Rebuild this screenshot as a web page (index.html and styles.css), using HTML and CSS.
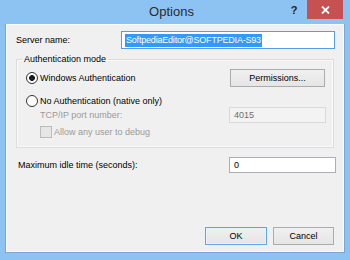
FILE: index.html
```html
<!DOCTYPE html>
<html lang="en">
<head>
    <meta charset="UTF-8">
    <title>Options</title>
    <link rel="stylesheet" href="styles.css">
</head>
<body>
<div class="window">
    <div class="titlebar">
        <span></span>
        <div class="title">Options</div>
        <div class="caption-buttons">
            <span class="help">?</span>
            <span class="close">
                <svg width="9" height="8" viewBox="0 0 9 8"><path d="M1 0.5 L8 7.5 M8 0.5 L1 7.5" stroke="#fff" stroke-width="1.8"/></svg>
            </span>
        </div>
    </div>

    <div class="client">
        <div class="row server-row">
            <span class="label">Server name:</span>
            <div class="textbox focused server-box"><span class="selected">SoftpediaEditor@SOFTPEDIA-S93</span></div>
        </div>

        <fieldset class="group">
            <legend>Authentication mode</legend>
            <div class="row first-row">
                <label class="option"><input type="radio" name="auth" checked>Windows Authentication</label>
                <button class="button permissions">Permissions...</button>
            </div>
            <div class="row second-row">
                <label class="option"><input type="radio" name="auth">No Authentication (native only)</label>
            </div>
            <div class="row port-row">
                <span class="label disabled indent">TCP/IP port number:</span>
                <div class="textbox disabled-box port-box">4015</div>
            </div>
            <div class="row check-row">
                <label class="option disabled indent"><input type="checkbox" disabled>Allow any user to debug</label>
            </div>
        </fieldset>

        <div class="row idle-row">
            <span class="label idle-label">Maximum idle time (seconds):</span>
            <div class="textbox idle-box">0</div>
        </div>

        <div class="footer">
            <button class="button default ok">OK</button>
            <button class="button cancel">Cancel</button>
        </div>
    </div>
</div>
</body>
</html>
```

FILE: styles.css
```css
body {
    margin: 0;
    font-family: "Liberation Sans", Arial, sans-serif;
    font-size: 9px;
    color: #000;
}

.window {
    width: 350px;
    height: 260px;
    background: #8cc3f2;
    display: flex;
    flex-direction: column;
}

/* title bar */
.titlebar {
    height: 24px;
    display: grid;
    grid-template-columns: 1fr auto 1fr;
    padding-right: 7px;
}
.title {
    font-size: 13px;
    line-height: 24px;
    color: #2b2b2b;
}
.caption-buttons {
    display: flex;
    justify-content: flex-end;
    align-items: flex-start;
}
.help {
    width: 26px;
    height: 19px;
    text-align: center;
    font-weight: bold;
    font-size: 11px;
    line-height: 20px;
    color: #222;
}
.close {
    width: 36px;
    height: 19px;
    background: #c75050;
    display: flex;
    align-items: center;
    justify-content: center;
}

/* client area */
.client {
    flex: 1;
    margin: 0 5px 7px;
    border: 1px solid #7ba6d3;
    border-top: none;
    background: #f0f0f0;
    box-shadow: inset 0 0 0 1px #fbfbfb;
    padding: 7px 9px 7px 10px;
    display: flex;
    flex-direction: column;
}

.row {
    display: flex;
    align-items: center;
    justify-content: space-between;
}

.textbox {
    box-sizing: border-box;
    height: 16px;
    border: 1px solid #abadb3;
    background: #fff;
    padding-left: 4px;
    line-height: 14px;
    white-space: nowrap;
}
.textbox.focused {
    border-color: #569de5;
}
.server-box {
    width: 214px;
    height: 18px;
    line-height: 16px;
    padding-left: 3px;
}
.selected {
    background: #3399ff;
    color: #fff;
    padding: 1px 1px 2px;
    letter-spacing: -0.2px;
}

/* group box */
.group {
    margin: 4px 1px 0 0;
    padding: 0 8px 9px 9px;
    border: 1px solid #dcdcdc;
    box-shadow: inset 0 0 0 1px #fafafa;
}
.group legend {
    line-height: 12px;
    padding: 0 2px;
    margin-left: -4px;
}
.first-row {
    margin-top: 4px;
    height: 18px;
}
.second-row {
    margin-top: 7px;
    height: 13px;
}
.port-row {
    height: 16px;
}
.check-row {
    margin-top: 3px;
    height: 12px;
}
.indent {
    margin-left: 14px;
}

.option {
    display: flex;
    align-items: center;
}
.option input {
    appearance: none;
    margin: 0 2px 0 0;
    width: 12px;
    height: 12px;
    box-sizing: border-box;
    border: 1px solid #333;
    background: #fff;
}
.option input[type="radio"] {
    border-radius: 50%;
}
.option input[type="radio"]:checked {
    background: radial-gradient(circle, #1a1a1a 0 2.6px, #fff 3.2px);
}
.option input[type="checkbox"] {
    border-color: #bcbcbc;
    background: #e6e6e6;
}

.disabled {
    color: #9a9a9a;
}
.disabled-box {
    width: 97px;
    margin-right: -1px;
    border-color: #d9d9d9;
    background: #f3f3f3;
    color: #6d6d6d;
}

/* buttons */
.button {
    box-sizing: border-box;
    height: 18px;
    padding: 0;
    border: 1px solid #acacac;
    background: linear-gradient(#f0f0f0, #e5e5e5);
    font: inherit;
    color: #000;
}
.button.default {
    border-color: #5ea5ea;
    box-shadow: inset 0 0 0 1px #e8f1fb;
}
.permissions {
    width: 95px;
}

.idle-row {
    margin-top: 9px;
}
.idle-label {
    margin-left: 2px;
}
.idle-box {
    width: 107px;
    margin-right: -1px;
}

.footer {
    margin-top: auto;
    margin-right: 1px;
    display: flex;
    justify-content: flex-end;
    gap: 6px;
}
.ok {
    width: 62px;
}
.cancel {
    width: 61px;
}
```
